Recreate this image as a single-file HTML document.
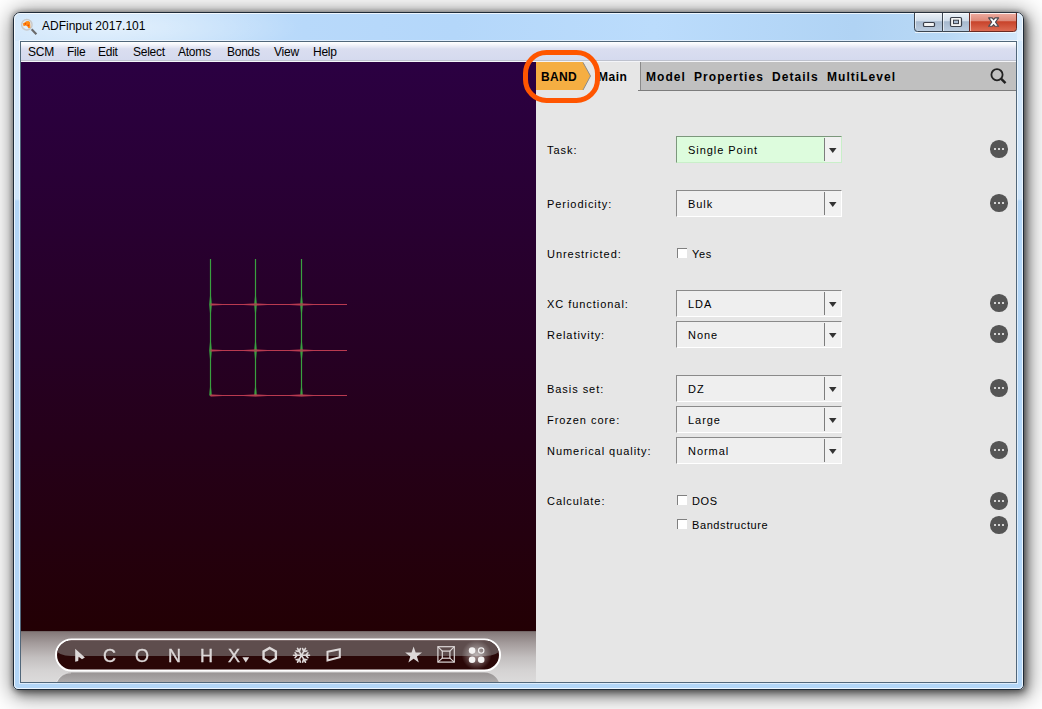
<!DOCTYPE html>
<html><head><meta charset="utf-8">
<style>
*{margin:0;padding:0;box-sizing:border-box}
html,body{width:1042px;height:709px;overflow:hidden;background:#fff;font-family:"Liberation Sans",sans-serif;position:relative}
.abs{position:absolute}
#win{left:13px;top:12px;width:1011px;height:678px;border:1px solid #1f2b38;border-radius:7px 7px 5px 5px;
 background:radial-gradient(ellipse 190px 34px at 95px 14px,rgba(255,255,255,.5),rgba(255,255,255,0)),linear-gradient(180deg,rgba(179,214,247,0) 28px,#b3d6f7 28px),linear-gradient(90deg,#c8e2fa 0px,#c4e0fa 150px,#b8d9fa 290px,#b4d7fa 440px,#bbdcfc 640px,#b0d3f4 840px,#b8d8f5 930px,#d6e9fb 1011px);
 box-shadow:2px 3px 22px 3px rgba(0,0,0,.5),3px 4px 8px rgba(0,0,0,.38),0 0 5px 1px rgba(0,0,0,.28)}
#wininner{left:0;top:0;right:0;bottom:0;border:1px solid rgba(255,255,255,.75);border-radius:6px 6px 4px 4px}
#title{left:42px;top:19px;font-size:12px;color:#000;white-space:nowrap}
#client{left:20px;top:41px;width:997px;height:642px;border:1px solid #51677a;box-shadow:0 0 0 1px rgba(255,255,255,.55);background:#e6e6e6;overflow:hidden}
#menu{left:0;top:0;width:995px;height:20px;background:linear-gradient(180deg,#fff 0,#f7f8fc 2px,#dadef0 7px,#d5daee 18px,#bec2ce 18px,#bec2ce 19px,#f4f5f9 19px)}
.mi{position:absolute;top:3px;font-size:12px;color:#000;white-space:nowrap;letter-spacing:-.25px}
#viewer{left:0;top:20px;width:515px;height:570px;background:linear-gradient(180deg,#2b0042 0%,#260024 50%,#230004 100%)}
#vbottom{left:0;top:589px;width:515px;height:51px;background:linear-gradient(180deg,#6a5e5e 0px,#857a7a 1.5px,#a39b9b 12px,#c2bebe 26px,#d5d3d3 40px,#dcdbdb 51px)}
#panel{left:515px;top:20px;width:480px;height:620px;background:#e6e6e6}
.lbl{position:absolute;left:11px;font-size:11px;color:#000;white-space:nowrap;letter-spacing:.95px}
.combo{position:absolute;left:140px;width:166px;height:27px;background:#efefef;border-top:1px solid #8a8a8a;border-left:1px solid #8a8a8a;border-right:1px solid #fff;border-bottom:1px solid #fff}
.combo .t{position:absolute;left:11px;top:7px;font-size:11px;color:#000;white-space:nowrap;letter-spacing:.95px}
.combo .sep{position:absolute;left:147px;top:1px;width:1px;height:23px;background:#7d7d7d}
.combo .btn{position:absolute;left:148px;top:0;width:16px;height:25px;background:#f1f1f1}
.combo .arr{position:absolute;left:152px;top:11px;width:7.5px;height:5px;background:#333;clip-path:polygon(0 0,100% 0,50% 100%)}
.combo.green{background:#ddfcdd;border-top:1px solid #7c977c;border-left:1px solid #7c977c;border-right:1px solid #c9efc9;border-bottom:1px solid #c9efc9}
.dots{position:absolute;left:454px;width:17.5px;height:17.5px;border-radius:50%;background:#555}
.dots i{position:absolute;top:8px;width:2.2px;height:2.2px;background:#fff;border-radius:50%}
.cb{position:absolute;left:141px;width:10px;height:10px;background:#fff;border-top:1px solid #808080;border-left:1px solid #808080}
.tab{position:absolute;top:8px;font-size:12px;font-weight:bold;color:#000;white-space:nowrap;letter-spacing:1.05px}
.tl{position:absolute;top:15px;font-size:18px;line-height:20px;color:#ddd8d8;white-space:nowrap;-webkit-text-stroke:.35px #ddd8d8;will-change:transform}
.cbl{position:absolute;left:156px;font-size:11px;color:#000;white-space:nowrap;letter-spacing:.6px}
</style></head><body>
<div id="win" class="abs"><div id="wininner" class="abs"></div>
</div>
<div class="abs" style="left:14px;top:41px;width:6px;height:160px;background:linear-gradient(180deg,rgba(235,245,255,.6),rgba(235,245,255,.5) 158px,rgba(235,245,255,0) 160px)"></div>
<div class="abs" style="left:1017px;top:30px;width:6px;height:171px;background:linear-gradient(180deg,rgba(235,245,255,.6),rgba(235,245,255,.5) 169px,rgba(235,245,255,0) 171px)"></div>
<!-- title icon -->
<svg class="abs" style="left:20px;top:17px" width="20" height="20" viewBox="0 0 20 20">
 <circle cx="6.85" cy="7.7" r="5.2" fill="rgba(230,242,255,.6)" stroke="#c9c9c9" stroke-width="1.5"/>
 <path d="M2.8 6.4 L4.6 5.6 L6.2 4.2 L8.6 4 L10.1 5.2 L10.3 7.6 L10.4 10.8 L8.2 11.2 L7.6 9.6 L5.8 8.6 L3.6 9.2 Z" fill="#ff8c14"/>
 <circle cx="5.4" cy="6.8" r="0.9" fill="#f04a00"/>
 <circle cx="8.3" cy="8.4" r="0.9" fill="#f04a00"/>
 <line x1="11.6" y1="12.3" x2="16.4" y2="17.3" stroke="#6a6a6a" stroke-width="2.1"/>
</svg>
<div id="title" class="abs">ADFinput 2017.101</div>
<!-- caption buttons -->
<svg class="abs" style="left:913px;top:12px" width="106" height="22" viewBox="0 0 106 22">
 <defs>
  <linearGradient id="gb" x1="0" y1="0" x2="0" y2="1">
   <stop offset="0" stop-color="#eef3f9"/><stop offset=".45" stop-color="#d2deeb"/><stop offset=".5" stop-color="#a7b9ce"/><stop offset="1" stop-color="#bccde0"/>
  </linearGradient>
  <linearGradient id="gr" x1="0" y1="0" x2="0" y2="1">
   <stop offset="0" stop-color="#f1b1a6"/><stop offset=".45" stop-color="#dd8a7a"/><stop offset=".5" stop-color="#c8432a"/><stop offset="1" stop-color="#dc6d55"/>
  </linearGradient>
 </defs>
 <path d="M1.5 0 V16.5 Q1.5 19.5 4.5 19.5 H29.5 V0 Z" fill="url(#gb)" stroke="#3b4550" stroke-width="1"/>
 <path d="M29.5 0 V19.5 H56.5 V0 Z" fill="url(#gb)" stroke="#3b4550" stroke-width="1"/>
 <path d="M56.5 0 V19.5 H100.5 Q103.5 19.5 103.5 16.5 V0 Z" fill="url(#gr)" stroke="#6a2a22" stroke-width="1"/>
 <path d="M1 0.5 H104" stroke="#28313c" stroke-width="1"/>
 <path d="M2.5 1.5 H28.5 M30.5 1.5 H55.5 M57.5 1.5 H102.5" stroke="#fff" stroke-opacity=".8" stroke-width="1"/>
 <path d="M2.5 1 V16 M30.5 1 V19 M57.5 1 V19" stroke="#fff" stroke-opacity=".6" stroke-width="1"/>
 <path d="M2 20.5 H103" stroke="#fff" stroke-opacity=".7" stroke-width="1"/>
 <rect x="10.5" y="10.5" width="11" height="4" rx="1" fill="#f4f4f4" stroke="#3a3f4a" stroke-width="1.2"/>
 <rect x="37.5" y="5.5" width="11" height="9" rx="1.2" fill="#f4f4f4" stroke="#3a3f4a" stroke-width="1.2"/>
 <rect x="40.5" y="8.2" width="5" height="3.4" fill="#a9bbd2" stroke="#3a3f4a" stroke-width="1"/>
 <path d="M75.6 5.9 H79.2 L80.6 7.7 L82 5.9 H85.6 L82.5 10.1 L85.6 14.3 H82 L80.6 12.5 L79.2 14.3 H75.6 L78.7 10.1 Z" fill="#fff" stroke="#4a4a52" stroke-width="1.1" stroke-linejoin="round"/>
</svg>

<div id="client" class="abs">
  <div id="menu" class="abs">
    <span class="mi" style="left:7px">SCM</span>
    <span class="mi" style="left:46px">File</span>
    <span class="mi" style="left:77px">Edit</span>
    <span class="mi" style="left:112px">Select</span>
    <span class="mi" style="left:157px">Atoms</span>
    <span class="mi" style="left:206px">Bonds</span>
    <span class="mi" style="left:253px">View</span>
    <span class="mi" style="left:292px">Help</span>
  </div>
  <div id="viewer" class="abs">
    <svg class="abs" style="left:0;top:0" width="515" height="570">
<line x1="189.5" y1="197" x2="189.5" y2="333.5" stroke="#3aa040" stroke-width="1.2"/>
<line x1="234.5" y1="197" x2="234.5" y2="333.5" stroke="#3aa040" stroke-width="1.2"/>
<line x1="280.5" y1="197" x2="280.5" y2="333.5" stroke="#3aa040" stroke-width="1.2"/>
<line x1="189.0" y1="242.5" x2="326" y2="242.5" stroke="#b93a50" stroke-width="1.2"/>
<line x1="189.0" y1="288.5" x2="326" y2="288.5" stroke="#b93a50" stroke-width="1.2"/>
<line x1="189.0" y1="333.5" x2="326" y2="333.5" stroke="#b93a50" stroke-width="1.2"/>
<path d="M188.0 242.5 L189.5 229.5 L191.0 242.5 ZM188.0 242.5 L189.5 255.5 L191.0 242.5 Z" fill="#3aa040" opacity=".8"/>
<path d="M189.5 241.0 L207.5 242.5 L189.5 244.0 Z" fill="#b93a50" opacity=".6"/>
<path d="M188.0 288.5 L189.5 275.5 L191.0 288.5 ZM188.0 288.5 L189.5 301.5 L191.0 288.5 Z" fill="#3aa040" opacity=".8"/>
<path d="M189.5 287.0 L207.5 288.5 L189.5 290.0 Z" fill="#b93a50" opacity=".6"/>
<path d="M188.0 333.5 L189.5 320.5 L191.0 333.5 Z" fill="#3aa040" opacity=".8"/>
<path d="M189.5 332.0 L207.5 333.5 L189.5 335.0 Z" fill="#b93a50" opacity=".6"/>
<path d="M233.0 242.5 L234.5 229.5 L236.0 242.5 ZM233.0 242.5 L234.5 255.5 L236.0 242.5 Z" fill="#3aa040" opacity=".8"/>
<path d="M234.5 241.0 L216.5 242.5 L234.5 244.0 ZM234.5 241.0 L252.5 242.5 L234.5 244.0 Z" fill="#b93a50" opacity=".6"/>
<path d="M233.0 288.5 L234.5 275.5 L236.0 288.5 ZM233.0 288.5 L234.5 301.5 L236.0 288.5 Z" fill="#3aa040" opacity=".8"/>
<path d="M234.5 287.0 L216.5 288.5 L234.5 290.0 ZM234.5 287.0 L252.5 288.5 L234.5 290.0 Z" fill="#b93a50" opacity=".6"/>
<path d="M233.0 333.5 L234.5 320.5 L236.0 333.5 Z" fill="#3aa040" opacity=".8"/>
<path d="M234.5 332.0 L216.5 333.5 L234.5 335.0 ZM234.5 332.0 L252.5 333.5 L234.5 335.0 Z" fill="#b93a50" opacity=".6"/>
<path d="M279.0 242.5 L280.5 229.5 L282.0 242.5 ZM279.0 242.5 L280.5 255.5 L282.0 242.5 Z" fill="#3aa040" opacity=".8"/>
<path d="M280.5 241.0 L262.5 242.5 L280.5 244.0 ZM280.5 241.0 L298.5 242.5 L280.5 244.0 Z" fill="#b93a50" opacity=".6"/>
<path d="M279.0 288.5 L280.5 275.5 L282.0 288.5 ZM279.0 288.5 L280.5 301.5 L282.0 288.5 Z" fill="#3aa040" opacity=".8"/>
<path d="M280.5 287.0 L262.5 288.5 L280.5 290.0 ZM280.5 287.0 L298.5 288.5 L280.5 290.0 Z" fill="#b93a50" opacity=".6"/>
<path d="M279.0 333.5 L280.5 320.5 L282.0 333.5 Z" fill="#3aa040" opacity=".8"/>
<path d="M280.5 332.0 L262.5 333.5 L280.5 335.0 ZM280.5 332.0 L298.5 333.5 L280.5 335.0 Z" fill="#b93a50" opacity=".6"/>
</svg>
  </div>
  <div id="vbottom" class="abs">
<svg class="abs" style="left:0;top:0" width="515" height="51" viewBox="0 0 515 51">
 <defs>
  <clipPath id="pc"><rect x="36" y="9.5" width="442" height="29" rx="14.5"/></clipPath>
  <radialGradient id="glow" cx="0.5" cy="0.5" r="0.5">
   <stop offset="0" stop-color="#fff" stop-opacity=".6"/><stop offset=".5" stop-color="#fff" stop-opacity=".3"/><stop offset="1" stop-color="#fff" stop-opacity="0"/>
  </radialGradient>
  <linearGradient id="refl" x1="0" y1="0" x2="0" y2="1">
   <stop offset="0" stop-color="#2a2222" stop-opacity=".36"/><stop offset=".3" stop-color="#2a2222" stop-opacity=".26"/><stop offset="1" stop-color="#2a2222" stop-opacity=".2"/>
  </linearGradient>
  <clipPath id="rc"><rect x="0" y="41" width="515" height="10"/></clipPath>
 </defs>
 <rect x="35" y="41.5" width="444" height="31" rx="15.5" fill="url(#refl)" clip-path="url(#rc)"/>
 <path d="M50 42 A15.5 15.5 0 0 0 35.5 51" fill="none" stroke="#fff" stroke-opacity=".35" stroke-width="1"/>
 <rect x="35" y="8.5" width="444" height="31" rx="15.5" fill="#2a0707" stroke="#fff" stroke-width="2"/>
 <g clip-path="url(#pc)">
  <rect x="35" y="9" width="444" height="16" rx="15" ry="7" fill="#5e4d4d"/>
  <circle cx="455.6" cy="24" r="15" fill="url(#glow)"/>
 </g>
 <path d="M54.2 17.7 L63.9 26.6 L61 28.2 L57.6 25.8 L57.2 30 L54.2 30.8 Z" fill="#ddd8d8"/>
 <path d="M221.4 26.2 H228.2 L224.8 31.6 Z" fill="#ddd8d8"/>
 <polygon points="248.70,17.00 254.85,20.55 254.85,27.65 248.70,31.20 242.55,27.65 242.55,20.55" fill="none" stroke="#ddd8d8" stroke-width="2.4"/>
 <path d="M280.50 24.30 L288.50 24.30 M284.90 24.30 L286.96 21.85 M284.90 24.30 L286.96 26.75 M280.50 24.30 L284.50 31.23 M282.70 28.11 L285.85 28.67 M282.70 28.11 L281.61 31.12 M280.50 24.30 L276.50 31.23 M278.30 28.11 L279.39 31.12 M278.30 28.11 L275.15 28.67 M280.50 24.30 L272.50 24.30 M276.10 24.30 L274.04 26.75 M276.10 24.30 L274.04 21.85 M280.50 24.30 L276.50 17.37 M278.30 20.49 L275.15 19.93 M278.30 20.49 L279.39 17.48 M280.50 24.30 L284.50 17.37 M282.70 20.49 L281.61 17.48 M282.70 20.49 L285.85 19.93" fill="none" stroke="#ddd8d8" stroke-width="1.6" stroke-linecap="round"/>
 <path d="M306.5 20.8 L318.8 18.3 L318.8 26.2 L306.5 29.5 Z" fill="none" stroke="#ddd8d8" stroke-width="2"/>
 <polygon points="392.60,15.40 394.66,21.47 401.06,21.55 395.93,25.38 397.83,31.50 392.60,27.80 387.37,31.50 389.27,25.38 384.14,21.55 390.54,21.47" fill="#ddd8d8"/>
 <rect x="416.9" y="15.7" width="16.4" height="15.4" fill="none" stroke="#ddd8d8" stroke-width="1.2"/>
 <rect x="421.3" y="20.1" width="7.6" height="7.1" fill="none" stroke="#ddd8d8" stroke-width="1.2"/>
 <path d="M416.9 15.7 L421.3 20.1 M433.3 15.7 L428.9 20.1 M416.9 31.1 L421.3 27.2 M433.3 31.1 L428.9 27.2" stroke="#ddd8d8" stroke-width="1.1"/>
 <circle cx="451.1" cy="19.6" r="3.3" fill="#f4f2f2"/>
 <circle cx="460.2" cy="19.6" r="2.7" fill="none" stroke="#f4f2f2" stroke-width="1.1"/>
 <circle cx="451.1" cy="28.7" r="3.3" fill="#f4f2f2"/>
 <circle cx="460.2" cy="28.7" r="3.3" fill="#f4f2f2"/>
</svg>
<div class="tl" style="left:82px">C</div>
<div class="tl" style="left:114px">O</div>
<div class="tl" style="left:147px">N</div>
<div class="tl" style="left:179px">H</div>
<div class="tl" style="left:207px">X</div>
</div>
  <div id="panel" class="abs">
<div class="abs" style="left:0;top:0;width:480px;height:28px;background:#e6e6e6"></div>
<div class="abs" style="left:104px;top:0;width:376px;height:29px;background:#c0c0c0;border-left:1px solid #8a8a8a;border-bottom:1px solid #7c7c7c"></div>
<div class="abs" style="left:102px;top:28px;width:3px;height:1px;background:#7c7c7c"></div>
<svg class="abs" style="left:0;top:0" width="60" height="30" viewBox="0 0 60 30"><path d="M0 0 H47 L54.5 14 L47 28 H0 Z" fill="#f5ae42"/><path d="M47 0.5 L54.5 14 L47 28" fill="none" stroke="#8c8c8c" stroke-width="1"/></svg>
<div class="tab" style="left:5px;letter-spacing:.35px">BAND</div>
<div class="tab" style="left:62px;letter-spacing:.5px">Main</div>
<div class="tab" style="left:110px">Model</div>
<div class="tab" style="left:158px">Properties</div>
<div class="tab" style="left:236px">Details</div>
<div class="tab" style="left:291px">MultiLevel</div>
<svg class="abs" style="left:450px;top:2px" width="24" height="24" viewBox="0 0 24 24"><circle cx="11" cy="10.7" r="5.6" fill="none" stroke="#222" stroke-width="1.8"/><line x1="15" y1="14.7" x2="19.5" y2="19.2" stroke="#222" stroke-width="2.4"/></svg>
<div class="lbl" style="top:82px">Task:</div>
<div class="combo green" style="top:74px"><div class="btn"></div><div class="sep"></div><div class="arr"></div><div class="t">Single Point</div></div>
<div class="dots" style="top:78px"><i style="left:3.8px"></i><i style="left:7.7px"></i><i style="left:11.8px"></i></div>
<div class="lbl" style="top:136px">Periodicity:</div>
<div class="combo" style="top:128px"><div class="btn"></div><div class="sep"></div><div class="arr"></div><div class="t">Bulk</div></div>
<div class="dots" style="top:132px"><i style="left:3.8px"></i><i style="left:7.7px"></i><i style="left:11.8px"></i></div>
<div class="lbl" style="top:236px">XC functional:</div>
<div class="combo" style="top:228px"><div class="btn"></div><div class="sep"></div><div class="arr"></div><div class="t">LDA</div></div>
<div class="dots" style="top:232px"><i style="left:3.8px"></i><i style="left:7.7px"></i><i style="left:11.8px"></i></div>
<div class="lbl" style="top:267px">Relativity:</div>
<div class="combo" style="top:259px"><div class="btn"></div><div class="sep"></div><div class="arr"></div><div class="t">None</div></div>
<div class="dots" style="top:263px"><i style="left:3.8px"></i><i style="left:7.7px"></i><i style="left:11.8px"></i></div>
<div class="lbl" style="top:321px">Basis set:</div>
<div class="combo" style="top:313px"><div class="btn"></div><div class="sep"></div><div class="arr"></div><div class="t">DZ</div></div>
<div class="dots" style="top:317px"><i style="left:3.8px"></i><i style="left:7.7px"></i><i style="left:11.8px"></i></div>
<div class="lbl" style="top:352px">Frozen core:</div>
<div class="combo" style="top:344px"><div class="btn"></div><div class="sep"></div><div class="arr"></div><div class="t">Large</div></div>
<div class="lbl" style="top:383px">Numerical quality:</div>
<div class="combo" style="top:375px"><div class="btn"></div><div class="sep"></div><div class="arr"></div><div class="t">Normal</div></div>
<div class="dots" style="top:379px"><i style="left:3.8px"></i><i style="left:7.7px"></i><i style="left:11.8px"></i></div>
<div class="lbl" style="top:186px">Unrestricted:</div>
<div class="cb" style="top:186px"></div><div class="cbl" style="top:186px">Yes</div>
<div class="lbl" style="top:433px">Calculate:</div>
<div class="cb" style="top:433px"></div><div class="cbl" style="top:433px">DOS</div>
<div class="dots" style="top:430px"><i style="left:3.8px"></i><i style="left:7.7px"></i><i style="left:11.8px"></i></div>
<div class="cb" style="top:457px"></div><div class="cbl" style="top:457px">Bandstructure</div>
<div class="dots" style="top:454px"><i style="left:3.8px"></i><i style="left:7.7px"></i><i style="left:11.8px"></i></div>
  </div>
</div>
<svg class="abs" style="left:518px;top:45px" width="90" height="65" viewBox="0 0 90 65"><rect x="7.5" y="7.5" width="72" height="48" rx="21" ry="21" fill="none" stroke="#ff5500" stroke-width="5"/></svg>
</body></html>
